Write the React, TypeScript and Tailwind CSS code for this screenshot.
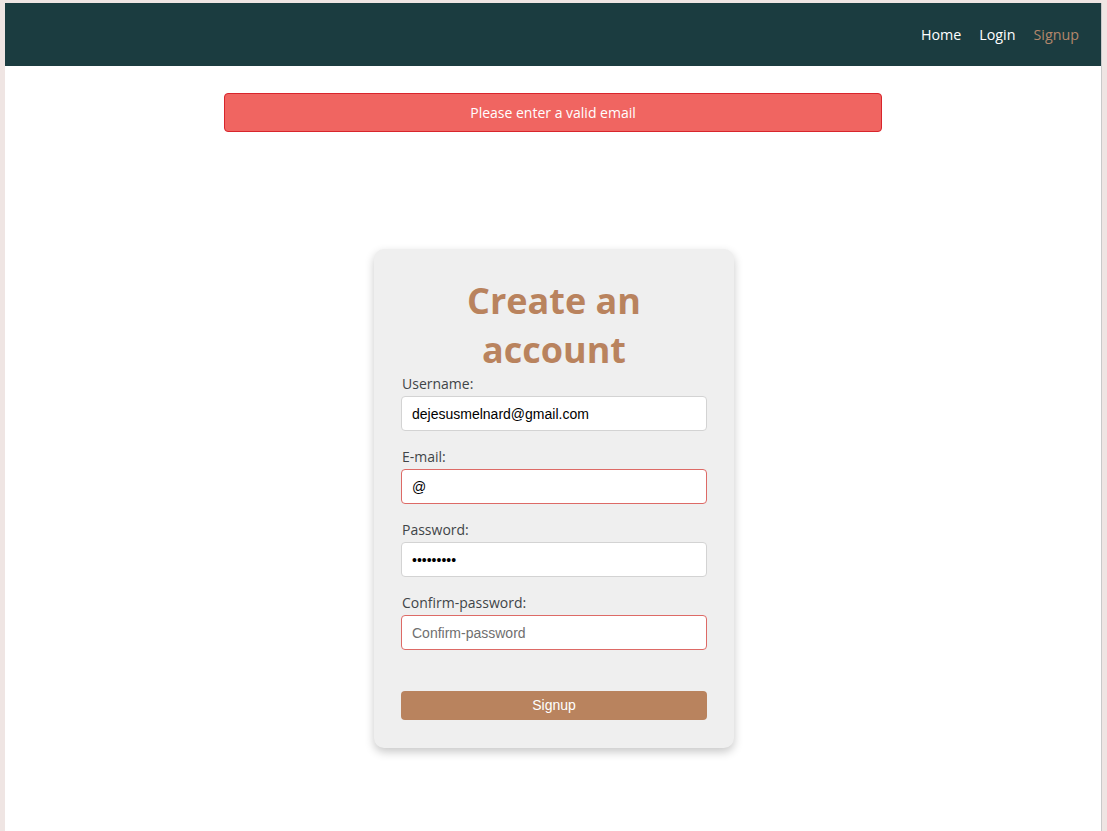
import { useState } from 'react';

const sans = "font-['Open_Sans',sans-serif]";
const arial = "font-['Liberation_Sans',Arial,sans-serif]";

function Field({ label, value, placeholder, type = 'text', error = false, onChange }: {
  label: string;
  value: string;
  placeholder?: string;
  type?: string;
  error?: boolean;
  onChange: (v: string) => void;
}) {
  return (
    <div className="flex flex-col">
      <label className={`${sans} pl-[1px] text-[14px] leading-[19px] text-[#3f4548]`}>{label}</label>
      <input
        type={type}
        value={value}
        placeholder={placeholder}
        onChange={(e) => onChange(e.target.value)}
        className={`${arial} mt-[3px] h-[35px] w-full rounded-[4px] border bg-white px-[10px] text-[14px] text-black outline-none placeholder:text-[#6f6f6f] ${
          error ? 'border-[#dd6a66]' : 'border-[#d3d3d3]'
        }`}
      />
    </div>
  );
}

export default function App() {
  const [username, setUsername] = useState('dejesusmelnard@gmail.com');
  const [email, setEmail] = useState('@');
  const [password, setPassword] = useState('abcdefghi');
  const [confirm, setConfirm] = useState('');

  return (
    <div className="min-h-screen bg-[#efe5e3] pt-[3px] px-[5px] flex">
      <div className="flex-1 flex flex-col bg-white border-r border-[#c9c9c9] min-h-[828px]">
        <nav className={`${sans} h-[63px] bg-[#1b3c40] flex items-center justify-end gap-[18px] pr-[22px] text-[14.3px]`}>
          <a className="text-white">Home</a>
          <a className="text-white">Login</a>
          <a className="text-[#b3876b]">Signup</a>
        </nav>

        <div className={`${sans} mx-auto mt-[27px] w-[60%] h-[39px] rounded-[4px] border border-[#d8252c] bg-[#f06561] flex items-center justify-center text-[14px] text-white`}>
          Please enter a valid email
        </div>

        <div className="mx-auto mt-[117px] w-[360px] translate-x-[1px] rounded-[10px] bg-[#efefef] px-[27px] pt-[27px] pb-[28px] shadow-[0_4px_10px_rgba(0,0,0,0.22)]">
          <h1 className={`${sans} text-center text-[36px] leading-[49px] font-bold text-[#b9835e]`}>
            Create an account
          </h1>
          <div className="flex flex-col gap-[16px]">
            <Field label="Username:" value={username} onChange={setUsername} />
            <Field label="E-mail:" value={email} onChange={setEmail} error />
            <Field label="Password:" type="password" value={password} onChange={setPassword} />
            <Field label="Confirm-password:" type="password" value={confirm} placeholder="Confirm-password" onChange={setConfirm} error />
          </div>
          <button className={`${arial} mt-[41px] h-[29px] w-full rounded-[4px] bg-[#b9835e] text-[14px] text-white`}>
            Signup
          </button>
        </div>
      </div>
    </div>
  );
}
